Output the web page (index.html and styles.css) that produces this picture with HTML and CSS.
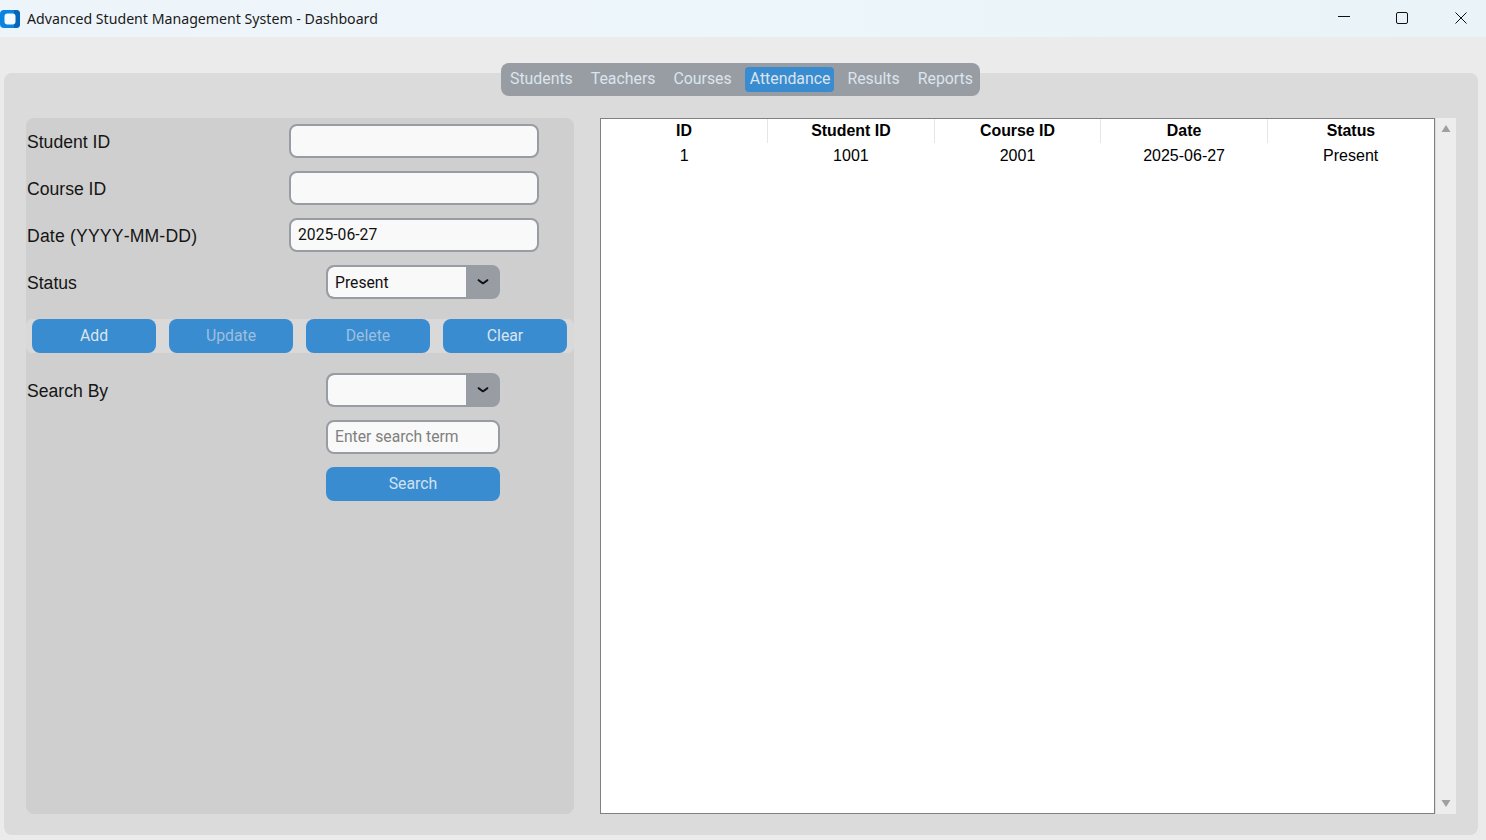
FILE: index.html
```html
<!DOCTYPE html>
<html lang="en">
<head>
<meta charset="utf-8">
<title>Advanced Student Management System - Dashboard</title>
<link rel="stylesheet" href="styles.css">
</head>
<body>
<div class="window">
  <header class="titlebar">
    <svg class="app-icon" width="20" height="18" viewBox="0 0 20 18"><rect width="20" height="18" rx="4" fill="#0a84e0"/><path d="M14 0h2a4 4 0 0 1 4 4v10a4 4 0 0 1-4 4h-2z" fill="#0667b8"/><rect x="4.5" y="3.5" width="11" height="11" rx="3" fill="#f4fafe"/></svg>
    <span class="title">Advanced Student Management System - Dashboard</span>
    <div class="win-controls">
      <svg class="win-btn" width="12" height="12" viewBox="0 0 12 12"><path d="M0 4.500h12" stroke="#111" fill="none"/></svg>
      <svg class="win-btn" width="12" height="12" viewBox="0 0 12 12"><rect x=".5" y=".5" width="11" height="11" rx="1.500" stroke="#111" fill="none"/></svg>
      <svg class="win-btn close" width="12" height="12" viewBox="0 0 12 12"><path d="M.5.5l11 11M11.500.5l-11 11" stroke="#111" fill="none"/></svg>
    </div>
  </header>
  <main class="content">
    <nav class="tabs">
      <span class="tab">Students</span>
      <span class="tab">Teachers</span>
      <span class="tab">Courses</span>
      <span class="tab active">Attendance</span>
      <span class="tab">Results</span>
      <span class="tab">Reports</span>
    </nav>
    <section class="panel">
      <div class="form">
        <div class="row"><label class="label">Student ID</label><div class="entry"></div></div>
        <div class="row"><label class="label">Course ID</label><div class="entry"></div></div>
        <div class="row"><label class="label date-label">Date (YYYY-MM-DD)</label><div class="entry">2025-06-27</div></div>
        <div class="row"><label class="label">Status</label>
          <div class="combo"><span class="combo-value">Present</span><span class="combo-arrow"><svg width="12" height="6" viewBox="0 0 12 6"><path d="M.8 1c1.700.2 3.200 2.800 5.200 3.400 2-.6 3.500-3.200 5.200-3.400" stroke="#111" stroke-width="2" fill="none"/></svg></span></div>
        </div>
        <div class="actions">
          <button class="btn">Add</button>
          <button class="btn disabled">Update</button>
          <button class="btn disabled">Delete</button>
          <button class="btn">Clear</button>
        </div>
        <div class="row"><label class="label">Search By</label>
          <div class="combo"><span class="combo-value"></span><span class="combo-arrow"><svg width="12" height="6" viewBox="0 0 12 6"><path d="M.8 1c1.700.2 3.200 2.800 5.200 3.400 2-.6 3.500-3.200 5.200-3.400" stroke="#111" stroke-width="2" fill="none"/></svg></span></div>
        </div>
        <div class="row"><span></span><div class="entry small placeholder">Enter search term</div></div>
        <div class="row"><span></span><button class="btn wide">Search</button></div>
      </div>
      <div class="table-wrap">
        <table class="table">
          <thead><tr><th>ID</th><th>Student ID</th><th>Course ID</th><th>Date</th><th>Status</th></tr></thead>
          <tbody><tr><td>1</td><td>1001</td><td>2001</td><td>2025-06-27</td><td>Present</td></tr></tbody>
        </table>
      </div>
      <div class="scrollbar">
        <svg width="10" height="7" viewBox="0 0 10 7"><path d="M5 0l4.500 7H.5z" fill="#a0a0a0"/></svg>
        <svg width="10" height="7" viewBox="0 0 10 7"><path d="M.5 0h9L5 7z" fill="#a0a0a0"/></svg>
      </div>
    </section>
  </main>
</div>
</body>
</html>
```
FILE: styles.css
```css
* { box-sizing: border-box; }
html, body { margin: 0; height: 100%; overflow: hidden; }
body { background: #ebebeb; font-family: Roboto, "Liberation Sans", sans-serif; color: #111; }
.window { height: 840px; display: flex; flex-direction: column; position: relative; }

.titlebar { height: 37px; flex: none; display: flex; align-items: center; background: linear-gradient(90deg, #eef5fa, #edf6fa 50%, #e9f3f8); }
.app-icon { flex: none; }
.title { margin-left: 7px; font: 14.160px/18px "Noto Sans", "Open Sans", sans-serif; color: #1a1a1a; }
.win-controls { margin-left: auto; display: flex; gap: 46px; padding-right: 19px; margin-top: -1px; }
.win-btn { display: block; }
.win-btn.close { margin-left: 1px; }

.content { flex: 1; padding: 36px 8px 5px 4px; position: relative; }
.panel { height: 762px; background: #dbdbdb; border-radius: 8px; padding: 45px 22px 21px 22px; display: flex; }

.tabs { position: absolute; top: 26px; left: 501px; width: 479px; height: 33px; padding: 4px; display: flex; gap: 8px; background: #979da3; border-radius: 8px; color: #dce4ee; font-size: 15.850px; line-height: 23px; }
.tab { padding: 0 5px; border-radius: 4px; height: 25px; }
.tab.active { background: #3a8cd0; padding: 0 4px 0 5px; }

.form { width: 548px; flex: none; background: #cfcfcf; border-radius: 8px; padding-top: 6px; margin-right: 26px; display: flex; flex-direction: column; gap: 13px; }
.row { display: grid; grid-template-columns: 263px 1fr; height: 34px; align-items: center; }
.label { font: 17.600px/20px "Liberation Sans", sans-serif; font-kerning: none; color: #151515; padding: 2px 0 0 1px; }
.date-label { letter-spacing: .18px; }
.entry { width: 250px; height: 34px; background: #f9f9f9; border: 2px solid #979da3; border-radius: 8px; font-size: 15.700px; line-height: 29px; padding-left: 7px; color: #111; }
.entry.small { width: 174px; margin-left: 37px; }
.placeholder { color: #808080; }
.combo { width: 174px; height: 34px; margin-left: 37px; display: flex; background: #979da3; border: 2px solid #979da3; border-radius: 8px; overflow: hidden; }
.combo-value { width: 138px; background: #f9f9f9; border-radius: 6px 0 0 6px; font-size: 15.700px; line-height: 31px; padding-left: 7px; }
.combo-arrow { flex: 1; display: flex; align-items: center; justify-content: center; padding-left: 1px; }

.actions { display: flex; gap: 13px; height: 34px; margin: 7px 0; padding-left: 6px; background: #d9d9d9; border-radius: 6px; }
.btn { display: block; width: 124px; height: 34px; padding: 0; border: 0; border-radius: 8px; background: #3a8cd0; color: #dce4ee; font: 15.800px/34px Roboto, sans-serif; }
.btn.disabled { color: #9ebfdc; }
.btn.wide { width: 174px; margin-left: 37px; color: #cfe2f2; }

.table-wrap { width: 835px; flex: none; background: #fff; border: 1px solid #808080; }
.table { width: 833px; border-collapse: collapse; table-layout: fixed; font: 16px/24px "Liberation Sans", sans-serif; color: #000; }
.table th { height: 24px; padding: 0; font-size: 15.900px; font-weight: 700; border-right: 1px solid #e6e6e6; }
.table th:last-child { border-right: 0; }
.table td { height: 24px; padding: 1px 0 0; text-align: center; line-height: 23px; }

.scrollbar { width: 20px; margin-left: 1px; flex: none; background: #ededed; display: flex; flex-direction: column; justify-content: space-between; align-items: center; padding: 7px 0; }
.scrollbar svg { display: block; }
```
